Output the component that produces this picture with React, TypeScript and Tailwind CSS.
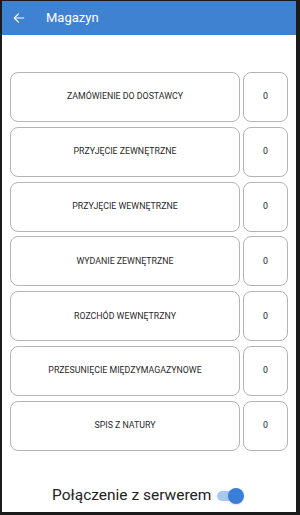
import React, { useState } from 'react';

const items = [
  'ZAMÓWIENIE DO DOSTAWCY',
  'PRZYJĘCIE ZEWNĘTRZNE',
  'PRZYJĘCIE WEWNĘTRZNE',
  'WYDANIE ZEWNĘTRZNE',
  'ROZCHÓD WEWNĘTRZNY',
  'PRZESUNIĘCIE MIĘDZYMAGAZYNOWE',
  'SPIS Z NATURY',
];

export default function App() {
  const [online, setOnline] = useState(true);

  return (
    <div className="w-[300px] h-[515px] bg-[#1b1b1b] pt-px pl-[2px] pr-[4px] pb-[3px] flex font-['Roboto',sans-serif]">
      <div className="flex-1 bg-white flex flex-col">
        {/* Top bar */}
        <div className="h-[34px] bg-[#3f82d1] flex items-center pl-[10px] text-white">
          <svg width="14" height="14" viewBox="0 0 24 24" fill="none" stroke="currentColor" strokeWidth="2" strokeLinecap="round" strokeLinejoin="round">
            <path d="M20 12H4" />
            <path d="M11 5l-7 7 7 7" />
          </svg>
          <span className="ml-[20px] text-[13px]">Magazyn</span>
        </div>

        {/* Document types */}
        <div className="mt-[37px] px-[8px] flex flex-col gap-[4.8px]">
          {items.map((name) => (
            <div key={name} className="flex gap-[3px] h-[50px]">
              <button className="w-[230px] h-full rounded-[8px] border border-[#b4b4b4] bg-white flex items-center justify-center text-[8.8px] font-normal text-[#2a2a2a]">
                {name}
              </button>
              <div className="w-[45px] h-full rounded-[8px] border border-[#b4b4b4] bg-white flex items-center justify-center text-[8.8px] text-[#2a2a2a]">
                0
              </div>
            </div>
          ))}
        </div>

        <div className="flex-1" />

        {/* Server connection */}
        <div className="h-[28px] flex items-center pl-[50px] pb-[4px]">
          <span className="text-[15.5px] text-[#222]">Połączenie z serwerem</span>
          <button
            onClick={() => setOnline(!online)}
            className="ml-[6px] relative w-[26px] h-[16px] flex items-center"
          >
            <span className={`w-[24px] h-[10px] rounded-full ${online ? 'bg-[#a9c8ee]' : 'bg-[#c8c8c8]'}`} />
            <span
              className={`absolute top-0 w-[16px] h-[16px] rounded-full shadow ${online ? 'left-[11px] bg-[#3a7fd6]' : 'left-0 bg-[#f1f1f1]'}`}
            />
          </button>
        </div>
      </div>
    </div>
  );
}
